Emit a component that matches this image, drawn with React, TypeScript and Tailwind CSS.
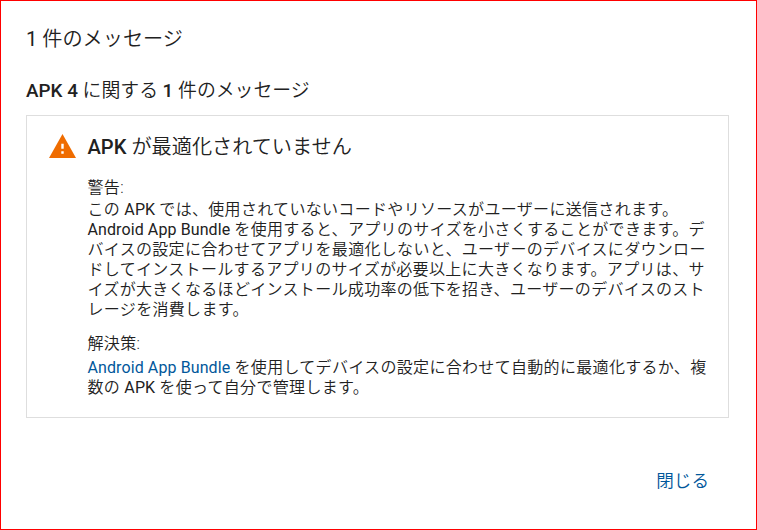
// Latin runs are set a little heavier than the Japanese around them
function Mixed({ children, latin = "font-normal tracking-[0.1px]" }: { children: string; latin?: string }) {
  return (
    <>
      {children.split(/([A-Za-z0-9][A-Za-z0-9 ]*)/).map((part, i) =>
        i % 2 ? <span key={i} className={latin}>{part}</span> : part
      )}
    </>
  );
}

const warning = [
  "この APK では、使用されていないコードやリソースがユーザーに送信されます。",
  "Android App Bundle を使用すると、アプリのサイズを小さくすることができます。デ",
  "バイスの設定に合わせてアプリを最適化しないと、ユーザーのデバイスにダウンロー",
  "ドしてインストールするアプリのサイズが必要以上に大きくなります。アプリは、サ",
  "イズが大きくなるほどインストール成功率の低下を招き、ユーザーのデバイスのスト",
  "レージを消費します。",
];

export default function App() {
  return (
    <div className="flex h-[530px] w-[757px] flex-col border border-[#ff0000] bg-white px-[25px] font-['Roboto','Noto_Sans_CJK_JP',sans-serif] font-[350] text-[#212121]">
      <h1 className="mt-[24px] text-[20.15px] leading-[28px]">
        <Mixed latin="font-normal">1 件のメッセージ</Mixed>
      </h1>
      <h2 className="mt-[25px] text-[18.87px] leading-[26px]">
        <Mixed latin="font-medium">APK 4 に関する 1 件のメッセージ</Mixed>
      </h2>

      <div className="mt-[11px] flex h-[303px] w-[703px] border border-[#dedede] pl-[22px]">
        <svg className="mt-[18px] h-[24px] w-[27px] shrink-0" viewBox="0 0 27 24">
          <path d="M0 24h27L13.5 0z" fill="#ef6c00" />
          <path d="M12.3 9.7h2.4v5h-2.4zM12.3 17.3h2.4v2.5h-2.4z" fill="#fff" />
        </svg>
        <div className="ml-[11.5px] w-[622px] text-[16px] leading-[20px] tracking-[0.32px]">
          <h3 className="mt-[18px] text-[20.15px] leading-[26px] tracking-normal">
            <Mixed latin="font-medium">APK が最適化されていません</Mixed>
          </h3>
          <p className="mt-[18px]">警告:</p>
          <p className="mt-[2px] whitespace-nowrap">
            {warning.map((line) => (
              <span key={line} className="block"><Mixed>{line}</Mixed></span>
            ))}
          </p>
          <p className="mt-[14px]">解決策:</p>
          <p className="mt-[4px] whitespace-nowrap">
            <a href="#" className="font-normal tracking-[0.1px] text-[#01579b]">Android App Bundle</a> を使用してデバイスの設定に合わせて自動的に最適化するか、複<br />
            <Mixed>数の APK を使って自分で管理します。</Mixed>
          </p>
        </div>
      </div>

      <button className="mt-[50px] mr-[22px] self-end text-[17.6px] leading-[26px] text-[#01579b]">閉じる</button>
    </div>
  );
}
